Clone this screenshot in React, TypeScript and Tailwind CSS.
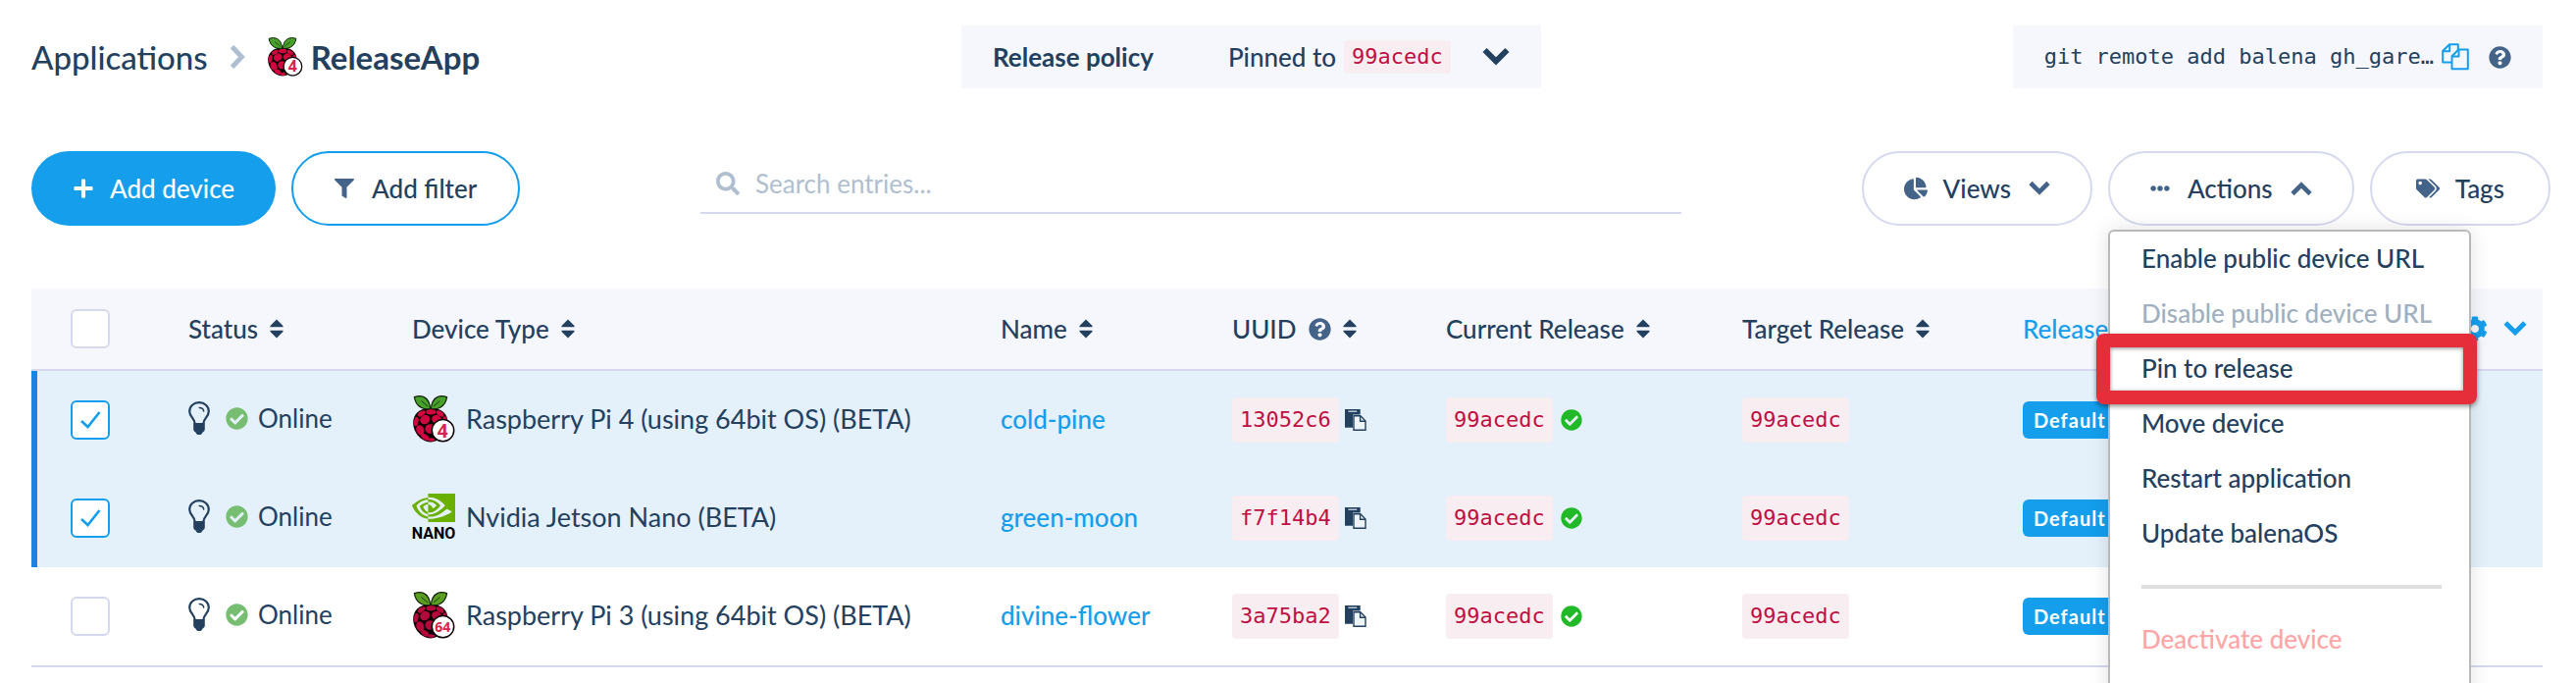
import type { ReactNode } from "react";
import { FaChartPie, FaCheckCircle, FaCog, FaEllipsisH, FaFilter, FaPlus, FaQuestionCircle, FaSearch, FaTags } from "react-icons/fa";

type DeviceKind = "rpi4" | "nano" | "rpi3";

interface Device {
  kind: DeviceKind;
  type: string;
  name: string;
  uuid: string;
  release: string;
  selected: boolean;
}

const devices: Device[] = [
  { kind: "rpi4", type: "Raspberry Pi 4 (using 64bit OS) (BETA)", name: "cold-pine", uuid: "13052c6", release: "99acedc", selected: true },
  { kind: "nano", type: "Nvidia Jetson Nano (BETA)", name: "green-moon", uuid: "f7f14b4", release: "99acedc", selected: true },
  { kind: "rpi3", type: "Raspberry Pi 3 (using 64bit OS) (BETA)", name: "divine-flower", uuid: "3a75ba2", release: "99acedc", selected: false },
];

function RaspberryLogo({ label, className }: { label: string; className: string }) {
  const wide = label.length > 1;
  const leaf = wide ? "#5a9e22" : "#46a02a";
  const berry = wide ? "#b5093c" : "#d2063f";
  return (
    <svg viewBox="0 0 44 48" className={`shrink-0 overflow-visible ${className}`} aria-hidden="true">
      <path d="M19 13C30 12 36.500 19 36.500 27C37 36 30 47 19 47.500C8 47 .8 36 1.200 27C1.500 19 8 12 19 13Z" fill="#0b0205" />
      <g fill={berry}>
        <ellipse cx="19.300" cy="16.800" rx="5" ry="2.700" />
        <ellipse cx="9.700" cy="18.400" rx="4.300" ry="2.400" transform="rotate(-32 9.700 18.400)" />
        <ellipse cx="28.500" cy="18.400" rx="4.300" ry="2.400" transform="rotate(32 28.500 18.400)" />
        <ellipse cx="13.200" cy="24.600" rx="5.200" ry="4.500" transform="rotate(-35 13.200 24.600)" />
        <ellipse cx="25.200" cy="24.600" rx="5.200" ry="4.500" transform="rotate(35 25.200 24.600)" />
        <ellipse cx="4.300" cy="26.500" rx="2.300" ry="4.800" transform="rotate(8 4.300 26.500)" />
        <ellipse cx="33.700" cy="26" rx="2.300" ry="4.800" transform="rotate(-8 33.700 26)" />
        <ellipse cx="8.300" cy="35.300" rx="3.900" ry="5.300" transform="rotate(-22 8.300 35.300)" />
        <ellipse cx="18.600" cy="34" rx="5.200" ry="4.800" />
        <ellipse cx="13.200" cy="42.200" rx="4.400" ry="2.700" transform="rotate(32 13.200 42.200)" />
        <ellipse cx="19.500" cy="45" rx="3.600" ry="1.700" />
      </g>
      <path d="M18.600 13.500C13.500 14.500 4 13 2.400 1.600C9-.6 17.500.5 18.600 13.500Z" fill={leaf} stroke="#12200c" strokeWidth="1.200" />
      <path d="M19.400 13.500C24.500 14.500 34 13 35.600 1.600C29-.6 20.500.5 19.400 13.500Z" fill={leaf} stroke="#12200c" strokeWidth="1.200" />
      <path d="M9.500 5.500L16 11M28.500 5.500L22 11" stroke="#12200c" strokeWidth=".8" fill="none" />
      <circle cx="31.500" cy="35.600" r="11.200" fill="#fff" stroke="#0b0205" strokeWidth="1.500" />
      <text
        x="31.200"
        y={wide ? 40.5 : 42.5}
        textAnchor="middle"
        fontFamily="Open Sans, sans-serif"
        fontWeight="700"
        fontSize={wide ? 14 : 19}
        fill="#d8234b"
      >
        {label}
      </text>
    </svg>
  );
}

function NanoLogo() {
  return (
    <svg viewBox="0 0 44 48" className="h-12 w-11 shrink-0 overflow-visible" aria-hidden="true">
      <g transform="translate(0 -7.450) scale(1.833)">
        <path
          fill="#6ab000"
          d="M8.948 8.798v-1.430a6.700 6.700 0 0 1 .424-.018c3.922-.124 6.493 3.374 6.493 3.374s-2.774 3.851-5.750 3.851c-.398 0-.787-.062-1.158-.185v-4.346c1.528.185 1.837.857 2.747 2.385l2.040-1.714s-1.492-1.952-4-1.952a6.016 6.016 0 0 0-.796.035m0-4.735v2.138l.424-.027c5.450-.185 9.010 4.470 9.010 4.470s-4.080 4.964-8.330 4.964c-.370 0-.733-.035-1.095-.097v1.325c.3.035.610.062.910.062 3.957 0 6.820-2.023 9.593-4.408.459.371 2.340 1.263 2.730 1.652-2.633 2.208-8.772 3.984-12.253 3.984-.335 0-.653-.018-.971-.053v1.864H24V4.063zm0 10.326v1.131c-3.657-.654-4.673-4.460-4.673-4.460s1.758-1.944 4.673-2.262v1.237H8.940c-1.528-.186-2.730 1.245-2.730 1.245s.680 2.412 2.739 3.110M2.456 10.900s2.164-3.197 6.500-3.533V6.201C4.153 6.590 0 10.653 0 10.653s2.350 6.802 8.948 7.420v-1.237c-4.840-.600-6.492-5.936-6.492-5.936"
        />
      </g>
      <text x="22" y="46" textAnchor="middle" fontFamily="Roboto, sans-serif" fontWeight="700" fontSize="16" fill="#000">
        NANO
      </text>
    </svg>
  );
}

function BulbIcon() {
  return (
    <svg viewBox="0 0 22 34" className="h-[34px] w-[22px] shrink-0" fill="none" aria-hidden="true">
      <path
        d="M6.700 22.500C6.500 17.500 1.200 15.500 1.200 10.200C1.200 5 5.500 1.200 11 1.200S20.800 5 20.800 10.200C20.800 15.500 15.500 17.500 15.300 22.500"
        stroke="currentColor"
        strokeWidth="2.200"
      />
      <path d="M11.200 6.500C13.600 6.500 15.300 7.700 15.700 10" stroke="currentColor" strokeWidth="1.500" strokeLinecap="round" />
      <path d="M5.200 22H16.800V28.500C16.800 30 15.800 31 14.600 31.400C14 33 12.800 34 11 34S8 33 7.400 31.400C6.200 31 5.200 30 5.200 28.500Z" fill="currentColor" />
    </svg>
  );
}

function PasteIcon() {
  return (
    <svg viewBox="0 0 22 22" className="size-[22px]" fill="none" aria-hidden="true">
      <path d="M0 0H15.700V5.500H8V18.700H0Z" fill="currentColor" />
      <path d="M3.500 2.200H12.200" stroke="#dbe8f2" strokeWidth="1.200" />
      <path d="M9 6.800H15.800L21 12V21.200H9Z" fill="#eef5fa" stroke="currentColor" strokeWidth="1.400" />
      <path d="M15.600 7V12.300H21" stroke="currentColor" strokeWidth="1.400" />
    </svg>
  );
}

function CopyIcon() {
  return (
    <svg viewBox="0 0 28 28" className="size-7" fill="none" stroke="#149eec" strokeWidth="2" strokeLinejoin="round" aria-hidden="true">
      <path d="M10 19.500H1.200V8L8 1.200H16.800V8" />
      <path d="M8.200 1.200V8.200H1.200" />
      <path d="M17.300 6.500H26.800V26.200H10.500V13.300Z" />
      <path d="M17.500 6.500V13.500H10.500" />
    </svg>
  );
}

function SortIcon() {
  return (
    <svg viewBox="0 0 14 20" className="h-5 w-[14px] shrink-0" fill="currentColor" aria-hidden="true">
      <path d="M7 .5L13.500 7V8.200H.5V7Z" />
      <path d="M7 19.500L.5 13V11.800H13.500V13Z" />
    </svg>
  );
}

const chevronPaths = {
  down: "M2 5.500L11 14.500L20 5.500",
  up: "M2 16.500L11 7.500L20 16.500",
  right: "M6 1.500L15 11L6 20.500",
};

function Chevron({ direction, className }: { direction: keyof typeof chevronPaths; className: string }) {
  return (
    <svg viewBox="0 0 22 22" className={`shrink-0 ${className}`} fill="none" stroke="currentColor" strokeWidth="4.600" aria-hidden="true">
      <path d={chevronPaths[direction]} />
    </svg>
  );
}

function Checkbox({ label, checked = false }: { label: string; checked?: boolean }) {
  return (
    <label className="relative block size-10">
      <input
        type="checkbox"
        aria-label={label}
        defaultChecked={checked}
        className="peer block size-10 appearance-none rounded-md border-2 border-[#d6d9ee] bg-white checked:border-[#149eec]"
      />
      <svg viewBox="0 0 40 40" className="absolute inset-0 hidden size-10 peer-checked:block" fill="none" aria-hidden="true">
        <path d="M11 21L17.500 27L29.500 12" stroke="#149eec" strokeWidth="2.600" />
      </svg>
    </label>
  );
}

function Code({ children }: { children: ReactNode }) {
  return (
    <code className="rounded bg-[#f8edf1] px-2 font-['DejaVu_Sans_Mono',monospace] text-[22px] leading-[46px] text-[#c00f43]">
      {children}
    </code>
  );
}

function HeaderCell({ children, help = false }: { children: ReactNode; help?: boolean }) {
  return (
    <th className="h-[84px] border-b-2 border-[#d6d9ee] p-0 text-left font-medium">
      <button type="button" className="flex items-center gap-3 whitespace-nowrap">
        {children}
        {help && <FaQuestionCircle className="size-[23px] text-[#446389]" />}
        <SortIcon />
      </button>
    </th>
  );
}

function PillButton({ children, className }: { children: ReactNode; className: string }) {
  return (
    <button type="button" className={`flex h-[76px] items-center rounded-full font-medium whitespace-nowrap ${className}`}>
      {children}
    </button>
  );
}

function MenuItem({ children, className = "" }: { children: ReactNode; className?: string }) {
  return (
    <button
      type="button"
      role="menuitem"
      className={`block h-14 w-full px-8 pb-0.5 text-left leading-[54px] font-medium whitespace-nowrap ${className}`}
    >
      {children}
    </button>
  );
}

function ActionsMenu() {
  return (
    <div
      role="menu"
      className="absolute top-full left-0 z-10 mt-1 w-[370px] rounded-md border-2 border-[#b9b9b9] bg-white pb-12 shadow-[0_0_20px_rgba(0,0,0,0.12)]"
    >
      <MenuItem>Enable public device URL</MenuItem>
      <MenuItem className="text-[#a0b0bf]">Disable public device URL</MenuItem>
      <div className="relative">
        <MenuItem>Pin to release</MenuItem>
        <div className="pointer-events-none absolute -inset-y-2 -right-2 -left-3.5 rounded-lg border-[14px] border-[#e52e3a] shadow-[0_2px_5px_rgba(0,0,0,0.45),inset_0_1px_4px_rgba(0,0,0,0.45)]" />
      </div>
      <MenuItem>Move device</MenuItem>
      <MenuItem>Restart application</MenuItem>
      <MenuItem>Update balenaOS</MenuItem>
      <hr className="mx-7 my-6 ml-8 h-1 border-0 bg-[#dedede]" />
      <MenuItem className="text-[#ffa5a5]">Deactivate device</MenuItem>
    </div>
  );
}

function DeviceRow({ device, last }: { device: Device; last: boolean }) {
  const { kind, type, name, uuid, release, selected } = device;
  const cell = last ? "h-[102px] p-0 border-b-2 border-[#d6d9ee]" : "h-[100px] p-0";
  return (
    <tr className={selected ? "bg-[#e4f0fa]" : "bg-white"}>
      <td className={selected ? `${cell} shadow-[inset_6px_0_0_#1b84de]` : cell}>
        <div className="pl-10">
          <Checkbox label={`Select ${name}`} checked={selected} />
        </div>
      </td>
      <td className={cell}>
        <div className="flex items-center pb-1">
          <BulbIcon />
          <FaCheckCircle className="ml-4 size-[23px] text-[#78be72]" />
          <span className="ml-2.5">Online</span>
        </div>
      </td>
      <td className={cell}>
        <div className="flex items-center gap-[11px] pb-0.5 text-[27px] whitespace-nowrap">
          {kind === "nano" ? <NanoLogo /> : <RaspberryLogo label={kind === "rpi4" ? "4" : "64"} className="h-12 w-11" />}
          {type}
        </div>
      </td>
      <td className={cell}>
        <a href="#device" className="block pb-0.5 font-medium text-[#149eec]">
          {name}
        </a>
      </td>
      <td className={cell}>
        <div className="flex items-center gap-1.5">
          <Code>{uuid}</Code>
          <button type="button" aria-label="Copy UUID">
            <PasteIcon />
          </button>
        </div>
      </td>
      <td className={cell}>
        <div className="flex items-center gap-2">
          <Code>{release}</Code>
          <FaCheckCircle className="size-[22px] text-[#22b928]" />
        </div>
      </td>
      <td className={cell}>
        <div className="flex">
          <Code>{release}</Code>
        </div>
      </td>
      <td className={cell}>
        <div className="flex">
          <span className="rounded-md bg-[#149eec] px-[11px] text-[20px] leading-[38px] font-bold tracking-wider text-white">
            Default
          </span>
        </div>
      </td>
    </tr>
  );
}

export default function App() {
  return (
    <main className="overflow-hidden bg-white pt-[26px] pr-[34px] pb-4 pl-8 font-[Lato,sans-serif] text-[26px] leading-[56px] text-[#23405f]">
      <header className="flex h-16 items-center">
        <nav className="flex w-[948px] items-center text-[33px] leading-10" aria-label="Breadcrumb">
          <a href="#applications" className="font-medium">
            Applications
          </a>
          <Chevron direction="right" className="mx-[18px] size-6 text-[#afbfd2]" />
          <RaspberryLogo label="4" className="h-10 w-[37px]" />
          <span className="ml-2 font-bold">ReleaseApp</span>
        </nav>
        <div className="flex h-16 items-center bg-[#f6f7fc] px-8">
          <span className="font-bold">Release policy</span>
          <button type="button" className="ml-[76px] flex items-center font-medium">
            Pinned to
            <code className="ml-2 rounded bg-[#f8edf1] px-2 font-['DejaVu_Sans_Mono',monospace] text-[22px] leading-[34px] text-[#c00f43]">
              99acedc
            </code>
            <Chevron direction="down" className="ml-8 size-7" />
          </button>
        </div>
        <div className="ml-auto flex h-16 items-center bg-[#f6f7fc] px-8">
          <code className="font-['DejaVu_Sans_Mono',monospace] text-[22px]">git remote add balena gh_gare…</code>
          <button type="button" aria-label="Copy command" className="ml-2">
            <CopyIcon />
          </button>
          <FaQuestionCircle className="ml-5 size-[23px] text-[#446389]" />
        </div>
      </header>

      <div className="mt-16 -mr-2 flex items-start">
        <div className="flex w-[682px] gap-4">
          <PillButton className="gap-4 bg-[#149eec] px-[42px] text-white">
            <FaPlus className="size-[22px]" />
            Add device
          </PillButton>
          <PillButton className="gap-[18px] border-2 border-[#149eec] px-[42px]">
            <FaFilter className="size-5 text-[#446389]" />
            Add filter
          </PillButton>
        </div>
        <label className="flex h-16 w-[1000px] items-center gap-4 border-b-2 border-[#d6d9ee] pt-1 pl-4">
          <FaSearch className="size-6 text-[#b0bfd0]" />
          <input
            type="text"
            aria-label="Search entries"
            placeholder="Search entries..."
            className="min-w-0 flex-1 leading-10 outline-none placeholder:text-[#b0bfd0]"
          />
        </label>
        <div className="ml-auto flex gap-4">
          <PillButton className="border-2 border-[#d6d9ee] px-[41px]">
            <FaChartPie className="mr-4 size-6 text-[#446389]" />
            Views
            <Chevron direction="down" className="ml-[18px] size-[22px] text-[#446389]" />
          </PillButton>
          <div className="relative">
            <PillButton className="border-2 border-[#d6d9ee] px-[41px]">
              <FaEllipsisH className="mr-[18px] size-5 text-[#446389]" />
              Actions
              <Chevron direction="up" className="ml-[18px] size-[22px] text-[#446389]" />
            </PillButton>
            <ActionsMenu />
          </div>
          <PillButton className="border-2 border-[#d6d9ee] px-[45px]">
            <FaTags className="mr-4 size-6 text-[#446389]" />
            Tags
          </PillButton>
        </div>
      </div>

      <table className="mt-16 w-full table-fixed border-separate border-spacing-0">
        <colgroup>
          <col className="w-[160px]" />
          <col className="w-[228px]" />
          <col className="w-[600px]" />
          <col className="w-[236px]" />
          <col className="w-[218px]" />
          <col className="w-[302px]" />
          <col className="w-[286px]" />
          <col />
        </colgroup>
        <thead className="bg-[#f6f7fc]">
          <tr>
            <th className="border-b-2 border-[#d6d9ee] p-0">
              <div className="pl-10">
                <Checkbox label="Select all devices" />
              </div>
            </th>
            <HeaderCell>Status</HeaderCell>
            <HeaderCell>Device Type</HeaderCell>
            <HeaderCell>Name</HeaderCell>
            <HeaderCell help>UUID</HeaderCell>
            <HeaderCell>Current Release</HeaderCell>
            <HeaderCell>Target Release</HeaderCell>
            <th className="border-b-2 border-[#d6d9ee] p-0 pr-4 font-medium text-[#149eec]">
              <div className="flex items-center">
                <button type="button">Release</button>
                <button type="button" aria-label="Table settings" className="ml-auto flex items-center gap-4">
                  <FaCog className="size-[26px]" />
                  <Chevron direction="down" className="size-6" />
                </button>
              </div>
            </th>
          </tr>
        </thead>
        <tbody>
          {devices.map((device, index) => (
            <DeviceRow key={device.name} device={device} last={index === devices.length - 1} />
          ))}
        </tbody>
      </table>
    </main>
  );
}
